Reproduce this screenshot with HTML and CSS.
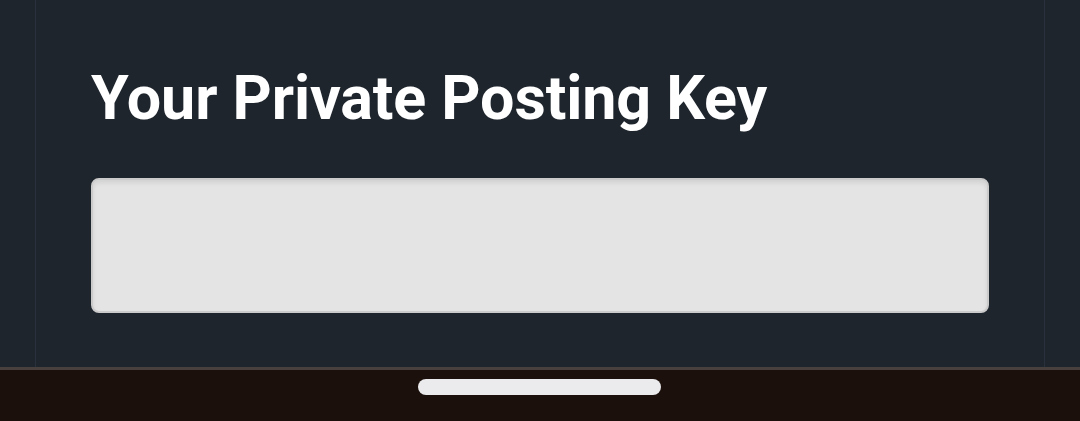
FILE: index.html
```html
<!DOCTYPE html>
<html>
<head>
<meta charset="utf-8">
<link rel="stylesheet" href="styles.css">
</head>
<body>
<div class="screen">
  <main class="panel">
    <h1 class="title">Your Private Posting Key</h1>
    <div class="input"></div>
  </main>
  <footer class="navbar">
    <div class="handle"></div>
  </footer>
</div>
</body>
</html>
```

FILE: styles.css
```css
html, body {
  margin: 0;
  padding: 0;
  background: #1e252d;
}
.screen {
  width: 1080px;
  height: 421px;
  display: flex;
  flex-direction: column;
  overflow: hidden;
}
.panel {
  flex: 0 0 367px;
  box-sizing: border-box;
  margin-left: 35px;
  width: 1010px;
  border-left: 1px solid #29323c;
  border-right: 1px solid #29323c;
  padding: 62px 55px 0 55px;
}
.title {
  margin: 0;
  font-family: Roboto, "Noto Sans", sans-serif;
  font-weight: 700;
  font-size: 61px;
  line-height: 72px;
  color: #ffffff;
  letter-spacing: -0.1px;
}
.input {
  margin-top: 44px;
  height: 135px;
  box-sizing: border-box;
  background: #e4e4e4;
  border: 2px solid #cbcbcb;
  border-radius: 8px;
  box-shadow: inset 0 3px 4px rgba(0,0,0,0.08);
}
.navbar {
  flex: 1;
  background: #1c100c;
  border-top: 3px solid #48403c;
  display: flex;
  justify-content: center;
  padding-top: 9px;
}
.handle {
  width: 243px;
  height: 16px;
  border-radius: 8px;
  background: #ebebed;
  margin-left: -1px;
}
```
